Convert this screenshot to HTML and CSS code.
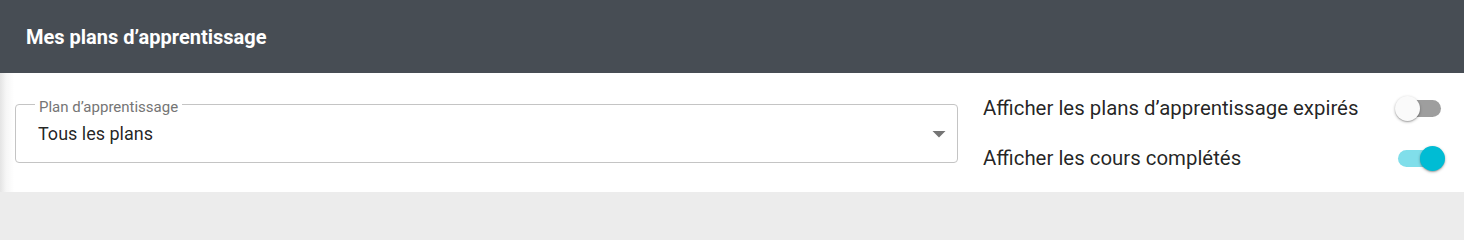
FILE: index.html
```html
<!DOCTYPE html>
<html lang="fr">
<head>
<meta charset="utf-8">
<title>Mes plans d’apprentissage</title>
<link rel="stylesheet" href="styles.css">
</head>
<body>
<section class="card">
  <header class="card-header">
    <h2 class="card-title">Mes plans d’apprentissage</h2>
  </header>
  <div class="card-body">
    <fieldset class="select-field">
      <legend class="select-label">Plan d’apprentissage</legend>
      <div class="select-row">
        <span class="select-value">Tous les plans</span>
        <svg class="select-arrow" width="14" height="7" viewBox="0 0 14 7"><path d="M0.5 0 L13.5 0 L7 6.5 Z" fill="#757575"/></svg>
      </div>
    </fieldset>
    <div class="switches">
      <div class="switch-row">
        <span class="switch-label">Afficher les plans d’apprentissage expirés</span>
        <span class="switch">
          <span class="switch-track"></span>
          <span class="switch-thumb"></span>
        </span>
      </div>
      <div class="switch-row">
        <span class="switch-label">Afficher les cours complétés</span>
        <span class="switch is-on">
          <span class="switch-track"></span>
          <span class="switch-thumb"></span>
        </span>
      </div>
    </div>
  </div>
</section>
</body>
</html>
```
FILE: styles.css
```css
html, body {
  margin: 0;
  padding: 0;
}
body {
  background: #ececec;
  font-family: Roboto, "Liberation Sans", Arial, sans-serif;
  color: rgba(0, 0, 0, 0.87);
}
.card {
  background: #fff;
  box-shadow: 0 2px 3px rgba(0, 0, 0, 0.25);
}
.card-header {
  height: 73px;
  background: #474d54;
  display: flex;
  align-items: center;
  padding-left: 26px;
}
.card-title {
  margin: 0;
  font-size: 20px;
  font-weight: 700;
  color: #fff;
  line-height: 24px;
  padding-top: 1px;
}
.card-body {
  display: flex;
  align-items: flex-start;
  height: 119px;
  padding: 0 19px 0 15px;
  background: linear-gradient(to right, #e4e4e4 0, #f6f6f6 6px, #fff 14px);
}
.select-field {
  box-sizing: border-box;
  width: 943px;
  margin: 20px 0 0 0;
  padding: 0 0 16px 19px;
  border: 1px solid #c4c4c4;
  border-radius: 4px;
  min-width: 0;
}
.select-label {
  padding: 7px 4px 0 4px;
  font-size: 15px;
  line-height: 15px;
  color: #757575;
}
.select-row {
  display: flex;
  align-items: center;
  justify-content: space-between;
  height: 24px;
  margin-top: 7px;
  padding-left: 3px;
  padding-right: 11px;
}
.select-value {
  font-size: 18px;
  line-height: 24px;
  color: rgba(0, 0, 0, 0.87);
}
.select-arrow {
  display: block;
  margin-top: 0;
}
.switches {
  flex: 1;
  margin-left: 25px;
  margin-top: 10px;
  display: flex;
  flex-direction: column;
}
.switch-row {
  height: 50px;
  display: flex;
  align-items: center;
  justify-content: space-between;
}
.switch-label {
  font-size: 20.4px;
  line-height: 24px;
  color: rgba(0, 0, 0, 0.87);
}
.switch {
  position: relative;
  width: 50px;
  height: 25px;
  display: block;
}
.switch-track {
  position: absolute;
  left: 3px;
  right: 4px;
  top: 4px;
  height: 17px;
  border-radius: 9px;
  background: #9e9e9e;
}
.switch-thumb {
  position: absolute;
  left: 0;
  top: 0;
  width: 25px;
  height: 25px;
  border-radius: 50%;
  background: #fafafa;
  box-shadow: 0 1px 3px rgba(0, 0, 0, 0.3), 0 1px 1px rgba(0, 0, 0, 0.14);
}
.switch.is-on .switch-track {
  background: #80deea;
}
.switch.is-on .switch-thumb {
  left: 25px;
  background: #00bcd4;
}
```
